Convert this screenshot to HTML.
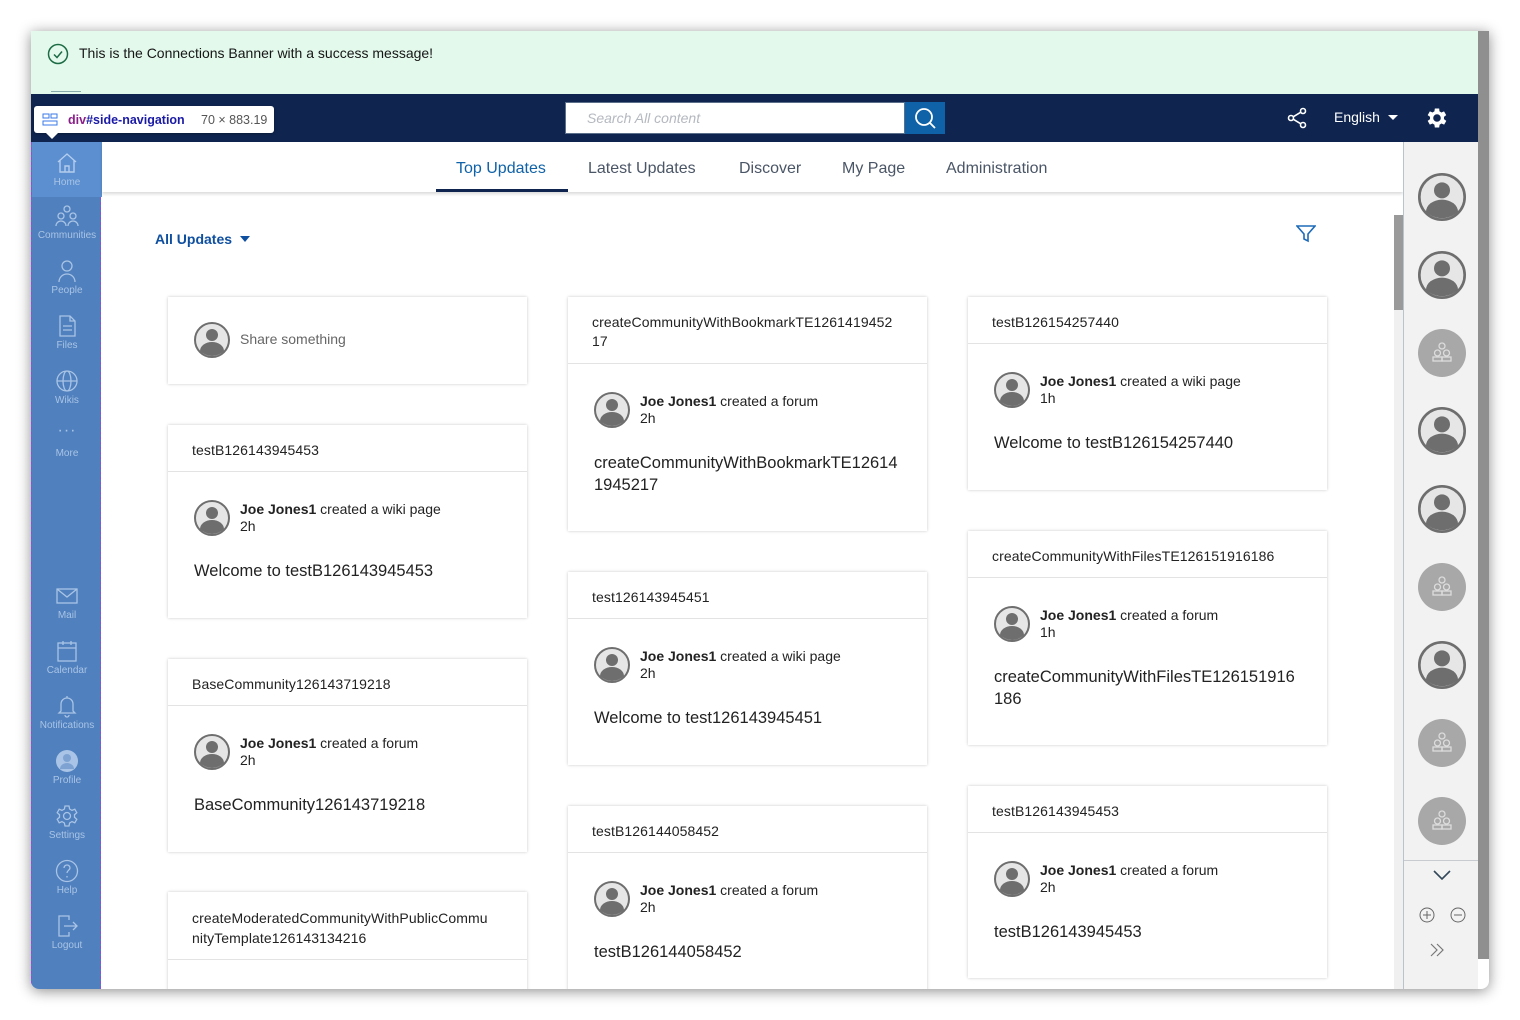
<!DOCTYPE html>
<html><head><meta charset="utf-8"><style>
*{box-sizing:border-box;margin:0;padding:0}
body{width:1520px;height:1020px;background:#fff;font-family:"Liberation Sans",Arial,sans-serif;position:relative;overflow:hidden}
.win{position:absolute;left:31px;top:31px;width:1458px;height:958px;background:#fff;box-shadow:0 2px 14px rgba(0,0,0,.45);border-radius:0 0 8px 8px;overflow:hidden}
.abs{position:absolute}
.banner{left:0;top:0;width:1447px;height:63px;background:#e3f9ec}
.nav{left:0;top:63px;width:1447px;height:48px;background:#0f2550}
.side{left:0;top:111px;width:70px;height:847px;background:#5080bd;border-right:1px dashed #8a4fe0;border-left:1px dashed #8a4fe0}
.si{position:absolute;left:0;width:70px;text-align:center;color:#a9c4e6;font-size:10px}
.si svg{display:block;margin:0 auto 2px}
.tabs{left:71px;top:111px;width:1301px;height:50px;background:#fff;box-shadow:0 2px 3px rgba(0,0,0,.15)}
.tab{position:absolute;top:18px;font-size:16px;color:#4a5566}
.card{position:absolute;width:359px;background:#fff;box-shadow:0 0 3px rgba(0,0,0,.22)}
.ch{padding:16px 24px 0;font-size:14px;color:#222;line-height:19px;border-bottom:1px solid #e3e3e3;letter-spacing:.1px}
.av{position:absolute;width:36px;height:36px}
.who{position:absolute;font-size:14px;color:#222;line-height:17px}
.who b{font-weight:bold}
.ttl{position:absolute;font-size:16.5px;color:#222;line-height:22px}
.rp{left:1372px;top:111px;width:75px;height:847px;background:#f2f2f2;border-left:1px solid #b9c3cc}
.ra{position:absolute;left:14px;width:48px;height:48px}
</style></head><body>
<div class="win">
<div class="abs banner">
<svg class="abs" style="left:16px;top:12px" width="22" height="22" viewBox="0 0 22 22"><circle cx="11" cy="11" r="9.5" fill="none" stroke="#1d6b45" stroke-width="1.5"/><path d="M7 11.5l3 3 5-6" fill="none" stroke="#1d6b45" stroke-width="1.5"/></svg>
<div class="abs" style="left:48px;top:14px;font-size:14px;color:#161616">This is the Connections Banner with a success message!</div>
</div>
<div class="abs nav">
<div class="abs" style="left:534px;top:8px;width:340px;height:32px;background:#fff;border:1px solid #5b6e8a"></div>
<div class="abs" style="left:556px;top:16px;font-size:14px;font-style:italic;color:#b4b8bf">Search All content</div>
<div class="abs" style="left:874px;top:8px;width:40px;height:32px;background:#0f62a8"><svg width="40" height="32"><circle cx="19" cy="15" r="8" fill="none" stroke="#fff" stroke-width="1.8"/><path d="M25 21l5 5" stroke="#fff" stroke-width="1.8"/></svg></div>
<svg class="abs" style="left:1254px;top:12px" width="24" height="24"><circle cx="6" cy="12" r="2.5" fill="none" stroke="#fff" stroke-width="1.6"/><circle cx="18" cy="5" r="2.5" fill="none" stroke="#fff" stroke-width="1.6"/><circle cx="18" cy="19" r="2.5" fill="none" stroke="#fff" stroke-width="1.6"/><path d="M8.2 10.8l7.6-4.6M8.2 13.2l7.6 4.6" stroke="#fff" stroke-width="1.6"/></svg>
<div class="abs" style="left:1303px;top:15px;font-size:14px;color:#fff">English</div>
<div class="abs" style="left:1357px;top:21px;border:5px solid transparent;border-top:5px solid #fff"></div>
<svg class="abs" style="left:1393px;top:11px" width="26" height="26" viewBox="0 0 24 24"><path fill="#fff" d="M19.4 13a7.5 7.5 0 000-2l2.1-1.6-2-3.5-2.5 1a7.6 7.6 0 00-1.7-1L15 3.2h-4l-.4 2.7a7.6 7.6 0 00-1.7 1l-2.5-1-2 3.5L6.6 11a7.5 7.5 0 000 2l-2.2 1.6 2 3.5 2.5-1a7.6 7.6 0 001.7 1l.4 2.7h4l.4-2.7a7.6 7.6 0 001.7-1l2.5 1 2-3.5zM13 15.5a3.5 3.5 0 110-7 3.5 3.5 0 010 7z" transform="translate(-1 0)"/></svg>
<div class="abs" style="left:20px;top:-3px;width:30px;height:4px;border-top:1px solid #8aa"></div>
</div>
<div class="abs" style="left:3px;top:75px;width:240px;height:27px;background:#fff;border-radius:3px;box-shadow:0 1px 3px rgba(0,0,0,.3);z-index:5">
<svg class="abs" style="left:8px;top:7px" width="16" height="13"><rect x="1" y="1" width="6" height="4" fill="none" stroke="#3b78e7"/><rect x="9" y="1" width="6" height="4" fill="none" stroke="#3b78e7"/><rect x="1" y="8" width="14" height="4" fill="none" stroke="#3b78e7"/></svg>
<div class="abs" style="left:34px;top:7px;font-size:12.5px;font-weight:bold;color:#8a1f8a">div<span style="color:#1a1aa6">#side-navigation</span></div>
<div class="abs" style="left:167px;top:7px;font-size:12.5px;color:#555">70 × 883.19</div>
<div class="abs" style="left:12px;top:27px;border:6px solid transparent;border-top:6px solid #fff"></div>
</div>
<div class="abs side">
<div class="si" style="top:0;height:55px;background:#5b8fd0;padding-top:9px"><svg width="24" height="24" fill="none" stroke="#b5cdee" stroke-width="1.4"><path d="M3 11L12 3l9 8M5 9v12h14V9M10 21v-6h4v6"/></svg>Home</div>
<div class="si" style="top:62px"><svg width="24" height="24" fill="none" stroke="#a9c4e6" stroke-width="1.3"><circle cx="12" cy="5" r="3"/><circle cx="6" cy="12" r="3"/><circle cx="18" cy="12" r="3"/><path d="M1 22a5 5 0 0110 0M13 22a5 5 0 0110 0"/></svg>Communities</div>
<div class="si" style="top:117px"><svg width="24" height="24" fill="none" stroke="#a9c4e6" stroke-width="1.3"><circle cx="12" cy="7" r="5"/><path d="M4 23a8 8 0 0116 0"/></svg>People</div>
<div class="si" style="top:172px"><svg width="24" height="24" fill="none" stroke="#a9c4e6" stroke-width="1.3"><path d="M5 2h10l5 5v15H5zM15 2v5h5M8 12h9M8 16h9"/></svg>Files</div>
<div class="si" style="top:227px"><svg width="24" height="24" fill="none" stroke="#a9c4e6" stroke-width="1.3"><circle cx="12" cy="12" r="10"/><ellipse cx="12" cy="12" rx="4" ry="10"/><path d="M2 12h20"/></svg>Wikis</div>
<div class="si" style="top:282px"><div style="height:24px;font-size:16px;line-height:14px;letter-spacing:1px">···</div>More</div>
<div class="si" style="top:442px"><svg width="24" height="24" fill="none" stroke="#a9c4e6" stroke-width="1.3"><rect x="2" y="5" width="20" height="14"/><path d="M2 5l10 8 10-8"/></svg>Mail</div>
<div class="si" style="top:497px"><svg width="24" height="24" fill="none" stroke="#a9c4e6" stroke-width="1.3"><rect x="3" y="4" width="18" height="18"/><path d="M3 9h18M8 2v4M16 2v4"/></svg>Calendar</div>
<div class="si" style="top:552px"><svg width="24" height="24" fill="none" stroke="#a9c4e6" stroke-width="1.3"><path d="M6 17V10a6 6 0 0112 0v7l2 2H4zM10 21a2 2 0 004 0M12 2v2"/></svg>Notifications</div>
<div class="si" style="top:607px"><svg width="24" height="24"><circle cx="12" cy="12" r="11" fill="#a9c4e6"/><circle cx="12" cy="9" r="4" fill="#7ea3d3"/><path d="M5 20a7 6 0 0114 0" fill="#7ea3d3"/></svg>Profile</div>
<div class="si" style="top:662px"><svg width="24" height="24" fill="none" stroke="#a9c4e6" stroke-width="1.3"><circle cx="12" cy="12" r="3.5"/><path d="M10 2h4l.6 3 2.4 1.4 2.8-1.2 2 3.5-2.3 2v2.6l2.3 2-2 3.5-2.8-1.2-2.4 1.4-.6 3h-4l-.6-3L7 17.6l-2.8 1.2-2-3.5 2.3-2v-2.6l-2.3-2 2-3.5L7 6.4 9.4 5z"/></svg>Settings</div>
<div class="si" style="top:717px"><svg width="24" height="24" fill="none" stroke="#a9c4e6" stroke-width="1.3"><circle cx="12" cy="12" r="10.5"/><path d="M9 9a3 3 0 116 0c0 2-3 2.5-3 5M12 17v1.5"/></svg>Help</div>
<div class="si" style="top:772px"><svg width="24" height="24" fill="none" stroke="#a9c4e6" stroke-width="1.3"><path d="M14 6V2H4v20h10v-4M9 12h13M18 8l4 4-4 4"/></svg>Logout</div>
</div>
<div class="abs tabs">
<div class="tab" style="left:354px;color:#0f62a8">Top Updates</div>
<div class="abs" style="left:334px;top:47px;width:132px;height:3px;background:#0f2550"></div>
<div class="tab" style="left:486px">Latest Updates</div>
<div class="tab" style="left:637px">Discover</div>
<div class="tab" style="left:740px">My Page</div>
<div class="tab" style="left:844px">Administration</div>
</div>
<div class="abs" style="left:124px;top:200px;font-size:14px;font-weight:bold;color:#0f4fa0">All Updates</div>
<div class="abs" style="left:209px;top:205px;border:5px solid transparent;border-top:6px solid #0f4fa0"></div>
<svg class="abs" style="left:1265px;top:193px" width="20" height="20" fill="none" stroke="#1d6bb8" stroke-width="1.6"><path d="M1 2h18l-7 8v7l-4-2v-5z"/></svg>
<div class="abs" style="left:1363px;top:184px;width:9px;height:774px;background:#f0f0f0"></div>
<div class="abs" style="left:1363px;top:184px;width:9px;height:95px;background:#9a9a9a"></div>

<svg width="0" height="0" style="position:absolute"><defs><g id="av"><circle cx="18" cy="18" r="17" fill="#e6e6e6" stroke="#6e6e6e" stroke-width="2"/><circle cx="18" cy="13" r="6" fill="#6e6e6e"/><path d="M6 29a12 9 0 0124 0a17 17 0 01-24 0z" fill="#6e6e6e"/></g><g id="grp"><circle cx="24" cy="24" r="24" fill="#a8a8a8"/><g fill="none" stroke="#dcdcdc" stroke-width="1.3"><circle cx="24" cy="17" r="3"/><circle cx="19.5" cy="24" r="3"/><circle cx="28.5" cy="24" r="3"/><rect x="15" y="28" width="9" height="4"/><rect x="24" y="28" width="9" height="4"/></g></g></defs></svg>

<div class="card" style="left:137px;top:266px;height:87px"><svg class="av" style="left:26px;top:25px"><use href="#av"/></svg><div class="who" style="left:72px;top:34px;color:#666;font-size:14px">Share something</div></div>
<div class="card" style="left:137px;top:394px;height:193px"><div class="ch" style="height:47px">testB126143945453</div><svg class="av" style="left:26px;top:75px"><use href="#av"/></svg><div class="who" style="left:72px;top:76px"><b>Joe Jones1</b> created a wiki page<br>2h</div><div class="ttl" style="left:26px;top:135px">Welcome to testB126143945453</div></div>
<div class="card" style="left:137px;top:628px;height:193px"><div class="ch" style="height:47px">BaseCommunity126143719218</div><svg class="av" style="left:26px;top:75px"><use href="#av"/></svg><div class="who" style="left:72px;top:76px"><b>Joe Jones1</b> created a forum<br>2h</div><div class="ttl" style="left:26px;top:135px">BaseCommunity126143719218</div></div>
<div class="card" style="left:137px;top:861px;height:120px"><div class="ch" style="height:68px;line-height:20px">createModeratedCommunityWithPublicCommu<br>nityTemplate126143134216</div></div>
<div class="card" style="left:537px;top:266px;height:234px"><div class="ch" style="height:67px">createCommunityWithBookmarkTE1261419452<br>17</div><svg class="av" style="left:26px;top:95px"><use href="#av"/></svg><div class="who" style="left:72px;top:96px"><b>Joe Jones1</b> created a forum<br>2h</div><div class="ttl" style="left:26px;top:155px">createCommunityWithBookmarkTE12614<br>1945217</div></div>
<div class="card" style="left:537px;top:541px;height:193px"><div class="ch" style="height:47px">test126143945451</div><svg class="av" style="left:26px;top:75px"><use href="#av"/></svg><div class="who" style="left:72px;top:76px"><b>Joe Jones1</b> created a wiki page<br>2h</div><div class="ttl" style="left:26px;top:135px">Welcome to test126143945451</div></div>
<div class="card" style="left:537px;top:775px;height:200px"><div class="ch" style="height:47px">testB126144058452</div><svg class="av" style="left:26px;top:75px"><use href="#av"/></svg><div class="who" style="left:72px;top:76px"><b>Joe Jones1</b> created a forum<br>2h</div><div class="ttl" style="left:26px;top:135px">testB126144058452</div></div>
<div class="card" style="left:937px;top:266px;height:193px"><div class="ch" style="height:47px">testB126154257440</div><svg class="av" style="left:26px;top:75px"><use href="#av"/></svg><div class="who" style="left:72px;top:76px"><b>Joe Jones1</b> created a wiki page<br>1h</div><div class="ttl" style="left:26px;top:135px">Welcome to testB126154257440</div></div>
<div class="card" style="left:937px;top:500px;height:214px"><div class="ch" style="height:47px">createCommunityWithFilesTE126151916186</div><svg class="av" style="left:26px;top:75px"><use href="#av"/></svg><div class="who" style="left:72px;top:76px"><b>Joe Jones1</b> created a forum<br>1h</div><div class="ttl" style="left:26px;top:135px">createCommunityWithFilesTE126151916<br>186</div></div>
<div class="card" style="left:937px;top:755px;height:192px"><div class="ch" style="height:47px">testB126143945453</div><svg class="av" style="left:26px;top:75px"><use href="#av"/></svg><div class="who" style="left:72px;top:76px"><b>Joe Jones1</b> created a forum<br>2h</div><div class="ttl" style="left:26px;top:135px">testB126143945453</div></div>

<div class="abs rp">
<svg class="ra" style="top:31px" viewBox="0 0 36 36"><use href="#av"/></svg>
<svg class="ra" style="top:109px" viewBox="0 0 36 36"><use href="#av"/></svg>
<svg class="ra" style="top:187px"><use href="#grp"/></svg>
<svg class="ra" style="top:265px" viewBox="0 0 36 36"><use href="#av"/></svg>
<svg class="ra" style="top:343px" viewBox="0 0 36 36"><use href="#av"/></svg>
<svg class="ra" style="top:421px"><use href="#grp"/></svg>
<svg class="ra" style="top:499px" viewBox="0 0 36 36"><use href="#av"/></svg>
<svg class="ra" style="top:577px"><use href="#grp"/></svg>
<svg class="ra" style="top:655px"><use href="#grp"/></svg>
<div class="abs" style="left:0;top:718px;width:75px;border-top:1px solid #c8ccd0"></div>
<svg class="abs" style="left:28px;top:726px" width="20" height="14" fill="none" stroke="#33475b" stroke-width="1.6"><path d="M2 3l8 8 8-8"/></svg>
<svg class="abs" style="left:15px;top:765px" width="16" height="16" fill="none" stroke="#666" stroke-width="1"><circle cx="8" cy="8" r="7"/><path d="M4 8h8M8 4v8"/></svg>
<svg class="abs" style="left:46px;top:765px" width="16" height="16" fill="none" stroke="#666" stroke-width="1"><circle cx="8" cy="8" r="7"/><path d="M4 8h8"/></svg>
<svg class="abs" style="left:24px;top:800px" width="18" height="16" fill="none" stroke="#777" stroke-width="1.2"><path d="M3 2l6 6-6 6M9 2l6 6-6 6"/></svg>
</div>
<div class="abs" style="left:1447px;top:0;width:11px;height:928px;background:#8f8f8f"></div>
</div>
</body></html>
